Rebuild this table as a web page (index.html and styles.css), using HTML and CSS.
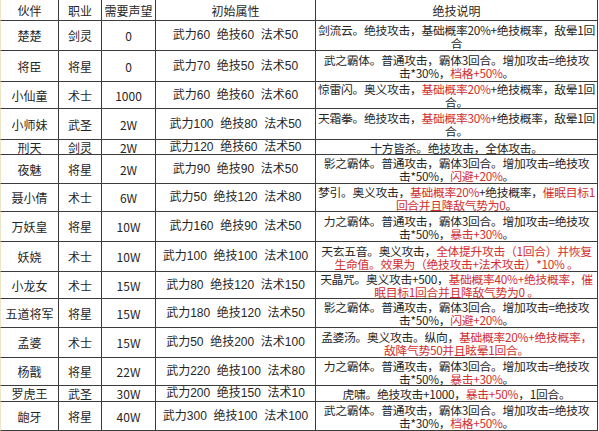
FILE: index.html
```html
<!DOCTYPE html>
<html lang="zh-CN">
<head>
<meta charset="utf-8">
<title>伙伴列表</title>
<link rel="stylesheet" href="styles.css">
</head>
<body>
<table class="t">
  <colgroup>
    <col class="c1"><col class="c2"><col class="c3"><col class="c4"><col class="c5">
  </colgroup>
  <thead>
    <tr class="h21"><th>伙伴</th><th>职业</th><th>需要声望</th><th>初始属性</th><th>绝技说明</th></tr>
  </thead>
  <tbody>
    <tr class="h30"><td>楚楚</td><td>剑灵</td><td>0</td><td class="attr">武力60&nbsp;&nbsp;绝技60&nbsp;&nbsp;法术50</td><td class="desc">剑流云。绝技攻击，基础概率20%+绝技概率，敌晕1回<br>合</td></tr>
    <tr class="h31"><td>将臣</td><td>将星</td><td>0</td><td class="attr">武力70&nbsp;&nbsp;绝技50&nbsp;&nbsp;法术50</td><td class="desc">武之霸体。普通攻击，霸体3回合。增加攻击=绝技攻<br>击*30%，<span class="hl">档格+50%</span>。</td></tr>
    <tr class="h26"><td>小仙童</td><td>术士</td><td>1000</td><td class="attr">武力60&nbsp;&nbsp;绝技60&nbsp;&nbsp;法术60</td><td class="desc">惊雷闪。奥义攻击，<span class="hl">基础概率20%</span>+绝技概率，敌晕1回<br>合。</td></tr>
    <tr class="h31"><td>小师妹</td><td>武圣</td><td>2W</td><td class="attr">武力100&nbsp;&nbsp;绝技80&nbsp;&nbsp;法术50</td><td class="desc">天霜拳。绝技攻击，<span class="hl">基础概率30%</span>+绝技概率，敌晕1回<br>合。</td></tr>
    <tr class="h15"><td>刑天</td><td>剑灵</td><td>2W</td><td class="attr">武力120&nbsp;&nbsp;绝技60&nbsp;&nbsp;法术50</td><td class="desc">十方皆杀。绝技攻击，全体攻击。</td></tr>
    <tr class="h29"><td>夜魅</td><td>将星</td><td>2W</td><td class="attr">武力90&nbsp;&nbsp;绝技90&nbsp;&nbsp;法术50</td><td class="desc">影之霸体。普通攻击，霸体3回合。增加攻击=绝技攻<br>击*50%，<span class="hl">闪避+20%</span>。</td></tr>
    <tr class="h28"><td>聂小倩</td><td>术士</td><td>6W</td><td class="attr">武力50&nbsp;&nbsp;绝技120&nbsp;&nbsp;法术80</td><td class="desc">梦引。奥义攻击，<span class="hl">基础概率20%</span>+绝技概率，<span class="hl">催眠目标1<br>回合并且降敌气势为0</span>。</td></tr>
    <tr class="h30"><td>万妖皇</td><td>将星</td><td>10W</td><td class="attr">武力160&nbsp;&nbsp;绝技90&nbsp;&nbsp;法术50</td><td class="desc">力之霸体。普通攻击，霸体3回合。增加攻击=绝技攻<br>击*50%，<span class="hl">暴击+30%</span>。</td></tr>
    <tr class="h30"><td>妖娆</td><td>术士</td><td>10W</td><td class="attr">武力100&nbsp;&nbsp;绝技100&nbsp;&nbsp;法术100</td><td class="desc">天玄五音。奥义攻击，<span class="hl">全体提升攻击（1回合）并恢复<br>生命值。效果为（绝技攻击+法术攻击）*10% 。</span></td></tr>
    <tr class="h26"><td>小龙女</td><td>术士</td><td>15W</td><td class="attr">武力80&nbsp;&nbsp;绝技120&nbsp;&nbsp;法术150</td><td class="desc">天晶咒。奥义攻击+500，<span class="hl">基础概率40%+绝技概率，催<br>眠目标1回合并且降敌气势为0 。</span></td></tr>
    <tr class="h29"><td>五道将军</td><td>将星</td><td>15W</td><td class="attr">武力180&nbsp;&nbsp;绝技120&nbsp;&nbsp;法术50</td><td class="desc">影之霸体。普通攻击，霸体3回合。增加攻击=绝技攻<br>击*50%，<span class="hl">闪避+20%</span>。</td></tr>
    <tr class="h30"><td>孟婆</td><td>术士</td><td>15W</td><td class="attr">武力50&nbsp;&nbsp;绝技200&nbsp;&nbsp;法术100</td><td class="desc">孟婆汤。奥义攻击。纵向，<span class="hl">基础概率20%+绝技概率，<br>敌降气势50并且眩晕1回合。</span></td></tr>
    <tr class="h28"><td>杨戬</td><td>将星</td><td>22W</td><td class="attr">武力220&nbsp;&nbsp;绝技100&nbsp;&nbsp;法术80</td><td class="desc">力之霸体。普通攻击，霸体3回合。增加攻击=绝技攻<br>击*50%，<span class="hl">暴击+30%</span>。</td></tr>
    <tr class="h16"><td>罗虎王</td><td>武圣</td><td>30W</td><td class="attr">武力200&nbsp;&nbsp;绝技150&nbsp;&nbsp;法术10</td><td class="desc">虎啸。绝技攻击+1000，<span class="hl">暴击+50%</span>，1回合。</td></tr>
    <tr class="h29"><td>龅牙</td><td>将星</td><td>40W</td><td class="attr">武力300&nbsp;&nbsp;绝技100&nbsp;&nbsp;法术100</td><td class="desc">武之霸体。普通攻击，霸体3回合。增加攻击=绝技攻<br>击*30%，<span class="hl">档格+50%</span>。</td></tr>
  </tbody>
</table>
</body>
</html>
```

FILE: styles.css
```css
html, body {
  margin: 0;
  padding: 0;
  background: #ffffff;
}

.t {
  border-collapse: separate;
  border-spacing: 0;
  table-layout: fixed;
  width: 598px;
  font-family: "Noto Sans CJK SC", "Noto Sans", sans-serif;
  font-size: 12px;
  color: #262626;
}

.c1 { width: 59px; }
.c2 { width: 43px; }
.c3 { width: 54px; }
.c4 { width: 160px; }
.c5 { width: 282px; }

.t th,
.t td {
  box-sizing: border-box;
  padding: 0;
  border-right: 1px solid #3c3c3c;
  border-bottom: 1px solid #3c3c3c;
  text-align: center;
  vertical-align: middle;
  line-height: 13px;
  white-space: nowrap;
  font-weight: normal;
}

.t th:first-child,
.t td:first-child {
  border-left: 1px solid #ebe6c8;
}

.attr {
  font-family: "Liberation Sans", "Noto Sans CJK SC", sans-serif;
}

.desc {
  font-size: 11.8px;
  letter-spacing: -0.3px;
}

.hl {
  color: #d22f2f;
}

.h15 { height: 15px; }
.h16 { height: 16px; }
.h21 { height: 21px; }
.h26 { height: 26px; }
.h28 { height: 28px; }
.h29 { height: 29px; }
.h30 { height: 30px; }
.h31 { height: 31px; }
```
